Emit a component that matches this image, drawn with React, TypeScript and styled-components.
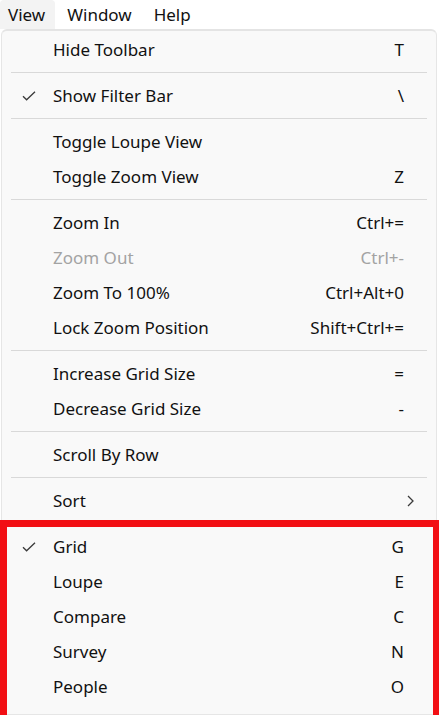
import React from "react";
import styled, { createGlobalStyle } from "styled-components";

const GlobalStyle = createGlobalStyle`
  html, body {
    margin: 0;
    padding: 0;
    background: #ffffff;
  }
  body {
    font-family: "Noto Sans", "Open Sans", Arial, sans-serif;
    color: #111111;
    overflow: hidden;
  }
`;

type Item = {
  label: string;
  shortcut?: string;
  checked?: boolean;
  disabled?: boolean;
  submenu?: boolean;
};

const sections: Item[][] = [
  [{ label: "Hide Toolbar", shortcut: "T" }],
  [{ label: "Show Filter Bar", shortcut: "\\", checked: true }],
  [
    { label: "Toggle Loupe View" },
    { label: "Toggle Zoom View", shortcut: "Z" },
  ],
  [
    { label: "Zoom In", shortcut: "Ctrl+=" },
    { label: "Zoom Out", shortcut: "Ctrl+-", disabled: true },
    { label: "Zoom To 100%", shortcut: "Ctrl+Alt+0" },
    { label: "Lock Zoom Position", shortcut: "Shift+Ctrl+=" },
  ],
  [
    { label: "Increase Grid Size", shortcut: "=" },
    { label: "Decrease Grid Size", shortcut: "-" },
  ],
  [{ label: "Scroll By Row" }],
  [{ label: "Sort", submenu: true }],
];

const modes: Item[] = [
  { label: "Grid", shortcut: "G", checked: true },
  { label: "Loupe", shortcut: "E" },
  { label: "Compare", shortcut: "C" },
  { label: "Survey", shortcut: "N" },
  { label: "People", shortcut: "O" },
];

const MenuBar = styled.div`
  display: flex;
  align-items: center;
  height: 29px;
`;

const BarItem = styled.div<{ $active?: boolean }>`
  height: 29px;
  display: flex;
  align-items: center;
  padding: 0 10px 0 8px;
  margin-right: 4px;
  font-size: 17px;
  border-radius: 4px 4px 0 0;
  background: ${(p) => (p.$active ? "#f3f3f3" : "transparent")};
`;

const Panel = styled.div`
  margin: 0 2px 0 1px;
  background: #f9f9f9;
  border: 1px solid #e6e6e6;
  border-top: 2px solid #e4e4e4;
  border-radius: 6px 6px 0 0;
  padding: 1px 0 10px;
`;

const Row = styled.div<{ $disabled?: boolean }>`
  height: 35px;
  display: grid;
  grid-template-columns: 51px 1fr auto 32px;
  align-items: center;
  font-size: 17px;
  color: ${(p) => (p.$disabled ? "#a3a3a3" : "#111111")};
`;

const Check = styled.div`
  display: flex;
  justify-content: center;
  padding-left: 2px;
  padding-top: 1px;
  color: #3a3a3a;
`;

const Label = styled.span`
  white-space: nowrap;
`;

const Shortcut = styled.span`
  white-space: nowrap;
  text-align: right;
`;

const Arrow = styled.div`
  display: flex;
  align-items: center;
  padding-left: 3px;
  color: #3a3a3a;
`;

const Separator = styled.div`
  height: 1px;
  background: #d9d9d9;
  margin: 5px 9px 5px 9px;
`;

const Highlight = styled.div`
  position: relative;
`;

const Outline = styled.div`
  position: absolute;
  top: -3px;
  left: -2px;
  right: -5px;
  bottom: -20px;
  border: 7px solid #f20f14;
  border-right-width: 8px;
  border-bottom-width: 8px;
  pointer-events: none;
`;

const CheckIcon = () => (
  <svg width="14" height="10" viewBox="0 0 14 10" fill="none">
    <path d="M1 5.2 L4.6 8.8 L13 0.8" stroke="currentColor" strokeWidth="1.3" />
  </svg>
);

const ChevronIcon = () => (
  <svg width="7" height="12" viewBox="0 0 7 12" fill="none">
    <path d="M1 1 L6 6 L1 11" stroke="currentColor" strokeWidth="1.3" />
  </svg>
);

function MenuRow({ item }: { item: Item }) {
  return (
    <Row $disabled={item.disabled}>
      <Check>{item.checked && <CheckIcon />}</Check>
      <Label>{item.label}</Label>
      <Shortcut>{item.shortcut}</Shortcut>
      <Arrow>{item.submenu && <ChevronIcon />}</Arrow>
    </Row>
  );
}

export default function App() {
  return (
    <>
      <GlobalStyle />
      <MenuBar>
        <BarItem $active>View</BarItem>
        <BarItem>Window</BarItem>
        <BarItem>Help</BarItem>
      </MenuBar>
      <Panel>
        {sections.map((section, i) => (
          <React.Fragment key={i}>
            {i > 0 && <Separator />}
            {section.map((item) => (
              <MenuRow key={item.label} item={item} />
            ))}
          </React.Fragment>
        ))}
        <Highlight>
          <Outline />
          <Separator />
          {modes.map((item) => (
            <MenuRow key={item.label} item={item} />
          ))}
        </Highlight>
      </Panel>
    </>
  );
}
